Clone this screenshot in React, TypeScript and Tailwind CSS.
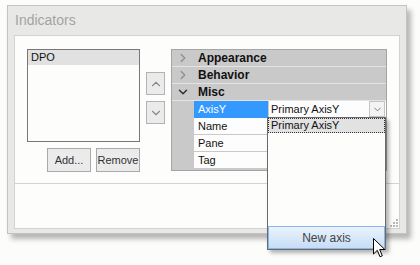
import { ChevronRight, ChevronDown, ChevronUp } from 'lucide-react'

const font = { fontFamily: '"Liberation Sans", Arial, sans-serif' }

function Category({ label, open }: { label: string; open?: boolean }) {
  return (
    <div className="flex h-[17px] items-center border-b border-[#e4e4e4] bg-[#c9c9c9]">
      <div className="flex w-[22px] justify-center">
        {open ? (
          <ChevronDown className="size-[14px] text-[#333]" strokeWidth={2.6} />
        ) : (
          <ChevronRight className="size-[14px] text-[#8e8e8e]" strokeWidth={2.2} />
        )}
      </div>
      <span className="pl-[4px] text-[12px] font-bold text-[#111]">{label}</span>
    </div>
  )
}

function PropRow({ name, selected, children }: { name: string; selected?: boolean; children?: React.ReactNode }) {
  return (
    <div className="flex h-[17px]">
      <div className="w-[22px] bg-[#c9c9c9]" />
      <div
        className={
          selected
            ? 'flex w-[74px] items-center border-b border-[#3399ff] bg-[#3399ff] pl-[4px] text-[11px] text-white'
            : 'flex w-[74px] items-center border-b border-[#c9c9c9] bg-[#fdfdfd] pl-[4px] text-[11px] text-[#111]'
        }
      >
        {name}
      </div>
      <div className="flex flex-1 items-center border-b border-l border-[#c9c9c9] bg-[#fdfdfd]">{children}</div>
    </div>
  )
}

function SmallButton({ children }: { children: React.ReactNode }) {
  return (
    <div className="flex h-[23px] w-[19px] items-center justify-center border border-[#b3b3b3] bg-[#ebebeb]">
      {children}
    </div>
  )
}

export default function App() {
  return (
    <div className="relative h-[265px] w-[420px] overflow-hidden bg-[#fcfcfa] pl-[7px] pt-[5px]" style={font}>
      {/* window */}
      <div className="flex h-[229px] w-[400px] flex-col border border-[#c3c3c3] bg-[#e8e9e7] shadow-[4px_5px_5px_rgba(0,0,0,0.28)]">
        <div className="flex h-[29px] items-center pl-[7px] text-[14px] text-[#a3a3a3]">Indicators</div>
        <div className="mx-[6px] mb-[4px] flex flex-1 flex-col border border-[#d3d3d3] bg-[#fdfdfc]">
          <div className="flex h-[147px] gap-[6px] pl-[12px] pt-[13px]">
            {/* list */}
            <div className="flex w-[113px] flex-col">
              <div className="h-[93px] border border-[#777] bg-[#fdfdfc]">
                <div className="flex h-[15px] items-center bg-[#e1e1e1] pl-[3px] text-[11px] text-[#111]">DPO</div>
              </div>
              <div className="mt-[6px] flex justify-end gap-[5px]">
                <div className="flex h-[24px] w-[44px] items-center justify-center border border-[#a9a9a9] bg-[#ebebeb] text-[11px] text-[#333]">
                  Add...
                </div>
                <div className="flex h-[24px] w-[44px] items-center justify-center border border-[#a9a9a9] bg-[#ebebeb] text-[11px] text-[#333]">
                  Remove
                </div>
              </div>
            </div>
            {/* up/down */}
            <div className="flex flex-col gap-[6px] pt-[23px]">
              <SmallButton>
                <ChevronUp className="size-[14px] text-[#8a8a8a]" strokeWidth={2} />
              </SmallButton>
              <SmallButton>
                <ChevronDown className="size-[14px] text-[#8a8a8a]" strokeWidth={2} />
              </SmallButton>
            </div>
            {/* property grid */}
            <div className="h-[122px] w-[216px] border border-[#a5a5a5] bg-[#c9c9c9]">
              <Category label="Appearance" />
              <Category label="Behavior" />
              <Category label="Misc" open />
              <PropRow name="AxisY" selected>
                <span className="flex-1 pl-[2px] text-[11px] text-[#111]">Primary AxisY</span>
                <div className="mr-[1px] flex h-[16px] w-[16px] items-center justify-center border border-[#c4c4c4] bg-[#f3f3f3]">
                  <ChevronDown className="size-[11px] text-[#666]" strokeWidth={1.8} />
                </div>
              </PropRow>
              <PropRow name="Name" />
              <PropRow name="Pane" />
              <PropRow name="Tag" />
            </div>
          </div>
          <div className="flex-1 border-t border-[#d3d3d3]" />
        </div>
      </div>

      {/* size grip */}
      <svg className="absolute left-[390px] top-[219px]" width="8" height="8" viewBox="0 0 8 8">
        <rect x="6" y="0" width="2" height="2" fill="#b8b8b8" />
        <rect x="3" y="3" width="2" height="2" fill="#b8b8b8" />
        <rect x="6" y="3" width="2" height="2" fill="#b8b8b8" />
        <rect x="0" y="6" width="2" height="2" fill="#b8b8b8" />
        <rect x="3" y="6" width="2" height="2" fill="#b8b8b8" />
        <rect x="6" y="6" width="2" height="2" fill="#b8b8b8" />
      </svg>

      {/* dropdown popup */}
      <div className="absolute left-[267px] top-[117px] flex h-[133px] w-[119px] flex-col border border-[#6a6a6a] bg-[#fdfdfc] shadow-[3px_3px_4px_rgba(0,0,0,0.3)]">
        <div className="flex h-[15px] items-center border border-dotted border-[#333] bg-[#e2e2e2] pl-[2px] text-[11px] text-[#111]">
          Primary AxisY
        </div>
        <div className="flex-1" />
        <div className="flex h-[23px] items-center justify-center border border-[#86b6ea] bg-gradient-to-b from-[#eaf3fd] to-[#c7ddf6] text-[12px] text-[#444]">
          New axis
        </div>
      </div>

      {/* mouse cursor */}
      <svg className="absolute left-[373px] top-[238px]" width="13" height="20" viewBox="0 0 13 20">
        <path d="M0.5 0.5 L0.5 16 L4.3 12.3 L7 18.8 L9.3 17.8 L6.7 11.5 L11.8 11.5 Z" fill="#fff" stroke="#000" strokeWidth="1" strokeLinejoin="miter" />
      </svg>
    </div>
  )
}
